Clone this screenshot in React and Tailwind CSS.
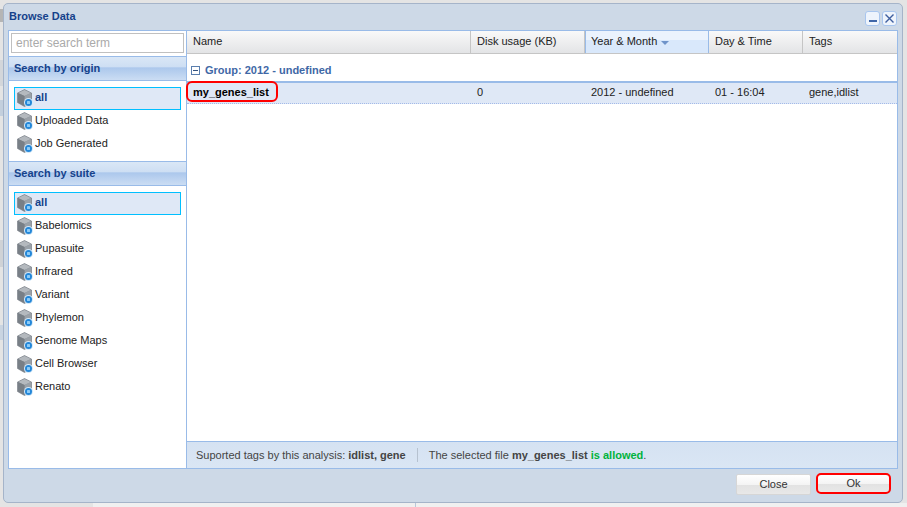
import React from "react";

const FONT = { fontFamily: '"Liberation Sans", Arial, sans-serif' };

function CubeIcon() {
  return (
    <svg width="16" height="19" viewBox="0 0 16 19" className="shrink-0 -mt-[1px]">
      <path d="M0.5 4 L7.5 0.5 L14.5 4 V13.5 L7.5 17.5 L0.5 13.5 Z" fill="#8a9097" stroke="#6f767d" strokeWidth="0.6" />
      <path d="M1 4 L7.5 1 L14 4 L7.5 7 Z" fill="#b4b9be" />
      <path d="M7.5 7 L14 4 V13.5 L7.5 17 Z" fill="#9aa1a8" />
      <path d="M1 4 L7.5 7 V17 L1 13.5 Z" fill="#787f86" />
      <circle cx="11.5" cy="13.5" r="4.5" fill="#d3e8f8" />
      <circle cx="11.5" cy="13.5" r="3.5" fill="#2487d8" />
      <rect x="10" y="12" width="3" height="3" rx="0.5" fill="#8ccbf7" />
    </svg>
  );
}

function NavItem({ label, selected }) {
  return (
    <div
      className={
        selected
          ? "flex items-center h-[23px] mx-[5px] pl-[2px] border border-[#00bfff] bg-[#dfe8f6] font-bold text-[#15428b]"
          : "flex items-center h-[23px] mx-[5px] pl-[2px] border border-transparent text-[#222]"
      }
    >
      <CubeIcon />
      <span className="ml-[2px] -mt-[3px]">{label}</span>
    </div>
  );
}

function SectionHeader({ label }) {
  return (
    <div className="h-[25px] border-y border-[#99bbe8] bg-[linear-gradient(#dae7f6_0%,#cddef3_45%,#abc7ec_46%,#cbddf3_100%)] pl-[5px] pt-[3px] text-[11px] font-bold text-[#15428b]">
      {label}
    </div>
  );
}

function HeaderCell({ label, width, sorted }) {
  return (
    <div
      className={
        sorted
          ? "flex items-center pl-[5px] pb-[1px] h-full shrink-0 border-x border-[#99bbe8] bg-[linear-gradient(#ebf3fd_0%,#ebf3fd_42%,#d9e8fb_43%,#d9e8fb_100%)]"
          : "flex items-center pl-[6px] pb-[1px] h-full shrink-0 border-r border-[#c5c5c5] bg-[linear-gradient(#f9f9f9_0%,#e3e4e6_100%)]"
      }
      style={{ width }}
    >
      <span>{label}</span>
      {sorted && (
        <svg width="8" height="4" viewBox="0 0 8 4" className="ml-[4px] mt-[3px]">
          <path d="M0 0 H8 L4 4 Z" fill="#6f93c9" />
        </svg>
      )}
    </div>
  );
}

function Button({ label, outlined }) {
  return (
    <div
      className={
        outlined
          ? "flex items-center justify-center w-[75px] h-[21px] -mt-[1px] rounded-[5px] border-2 border-[#ff0000] bg-[linear-gradient(#ffffff_0%,#f4f4f4_50%,#e2e2e2_51%,#e8e8e8_100%)] text-[#333]"
          : "flex items-center justify-center w-[75px] h-[21px] rounded-[2px] border border-[#d6d6d6] bg-[linear-gradient(#ffffff_0%,#f4f4f4_50%,#e2e2e2_51%,#e8e8e8_100%)] text-[#333]"
      }
    >
      {label}
    </div>
  );
}

export default function App() {
  const origins = ["Uploaded Data", "Job Generated"];
  const suites = ["Babelomics", "Pupasuite", "Infrared", "Variant", "Phylemon", "Genome Maps", "Cell Browser", "Renato"];

  return (
    <div style={FONT} className="relative w-[907px] h-[507px] overflow-hidden bg-[#e4e4e4] pt-[3px] pl-[3px] text-[11px] text-[#222]">
      {/* dimmed page behind the window */}
      <div className="absolute left-0 top-[9px] w-[3px] h-[13px] bg-[#b5b5b5]" />
      <div className="absolute left-0 top-[60px] w-[3px] h-[26px] bg-[#d3d6da]" />
      <div className="absolute left-0 top-[100px] w-[3px] h-[16px] bg-[#c3cfdd]" />
      <div className="absolute left-0 top-[240px] w-[3px] h-[27px] bg-[#cfd2d6]" />
      <div className="absolute left-0 top-[325px] w-[3px] h-[15px] bg-[#c9d4e1]" />
      <div className="absolute left-[93px] right-0 bottom-0 h-[4px] bg-[#f0f0f0]" />
      <div className="absolute left-[415px] bottom-0 w-px h-[4px] bg-[#b9c7da]" />

      <div className="relative w-[900px] h-[500px] rounded-[5px] border border-[#a5b4c9] bg-[#cdd9e7] flex flex-col px-[4px]">
        {/* title bar */}
        <div className="h-[26px] shrink-0 flex items-center justify-between pl-[1px] pr-[1px]">
          <span className="text-[11px] font-bold text-[#15428b] -mt-[2px]">Browse Data</span>
          <div className="flex gap-[2px] mt-[2px]">
            <div className="w-[15px] h-[15px] rounded-[3px] border border-[#a9c6ee] bg-[#eef4fc] flex items-end justify-center pb-[3px]">
              <div className="w-[8px] h-[2px] bg-[#3f66a8]" />
            </div>
            <div className="w-[15px] h-[15px] rounded-[3px] border border-[#a9c6ee] bg-[#eef4fc] flex items-center justify-center">
              <svg width="11" height="11" viewBox="0 0 11 11">
                <path d="M1.5 1.5 L9.5 9.5 M9.5 1.5 L1.5 9.5" stroke="#3f5f9f" strokeWidth="1.4" fill="none" />
              </svg>
            </div>
          </div>
        </div>

        {/* body */}
        <div className="w-[890px] h-[439px] shrink-0 border border-[#99bbe8] flex bg-white">
          <div className="w-[178px] shrink-0 border-r border-[#99bbe8] flex flex-col">
            <div className="h-[25px] shrink-0 pt-[2px] pl-[2px]">
              <div className="w-[173px] h-[20px] border border-[#c0c0c0] bg-white pl-[4px] flex items-center text-[12px] text-[#aaa]">
                enter search term
              </div>
            </div>
            <SectionHeader label="Search by origin" />
            <div className="pt-[6px] h-[80px] shrink-0">
              <NavItem label="all" selected />
              {origins.map((o) => (
                <NavItem key={o} label={o} />
              ))}
            </div>
            <SectionHeader label="Search by suite" />
            <div className="pt-[6px]">
              <NavItem label="all" selected />
              {suites.map((s) => (
                <NavItem key={s} label={s} />
              ))}
            </div>
          </div>

          <div className="flex-1 flex flex-col min-w-0">
            <div className="h-[23px] shrink-0 flex border-b border-[#c5c5c5] bg-[#e9e9e9]">
              <HeaderCell label="Name" width={284} />
              <HeaderCell label="Disk usage (KB)" width={114} />
              <HeaderCell label="Year & Month" width={124} sorted />
              <HeaderCell label="Day & Time" width={94} />
              <div className="flex-1 flex items-center pl-[6px] pb-[1px] bg-[linear-gradient(#f9f9f9_0%,#e3e4e6_100%)]">Tags</div>
            </div>

            <div className="h-[29px] shrink-0 flex items-center pl-[4px] pt-[5px] font-bold text-[#3f68a6] border-b-2 border-[#99bbe8]">
              <div className="w-[9px] h-[9px] border border-[#5b7fae] flex items-center justify-center mr-[5px] bg-white">
                <div className="w-[5px] h-[1px] bg-[#34527e]" />
              </div>
              Group: 2012 - undefined
            </div>

            <div className="h-[21px] shrink-0 flex items-center pb-[1px] bg-[#dfe8f6] border-b border-dotted border-[#a3bae9] relative">
              <div className="w-[284px] pl-[6px] font-bold text-black">my_genes_list</div>
              <div className="w-[114px] pl-[6px]">0</div>
              <div className="w-[124px] pl-[6px]">2012 - undefined</div>
              <div className="w-[94px] pl-[6px]">01 - 16:04</div>
              <div className="pl-[6px]">gene,idlist</div>
              <div className="absolute left-[-1px] top-[-2px] w-[92px] h-[21px] rounded-[6px] border-2 border-[#ff0000]" />
            </div>

            <div className="flex-1" />

            <div className="h-[27px] shrink-0 flex items-center border-t border-[#99bbe8] bg-[linear-gradient(#d5e2f2_0%,#dae6f4_100%)] pl-[9px] text-[#444]">
              <span>
                Suported tags by this analysis: <b>idlist, gene</b>
              </span>
              <div className="w-px h-[14px] bg-[#b6c2d0] mx-[11px]" />
              <span>
                The selected file <b>my_genes_list</b> <b className="text-[#00b33c]">is allowed</b>.
              </span>
            </div>
          </div>
        </div>

        {/* buttons */}
        <div className="flex justify-end items-start gap-[5px] pt-[5px] pr-[7px] pl-[1px]">
          <Button label="Close" />
          <Button label="Ok" outlined />
        </div>
      </div>
    </div>
  );
}
